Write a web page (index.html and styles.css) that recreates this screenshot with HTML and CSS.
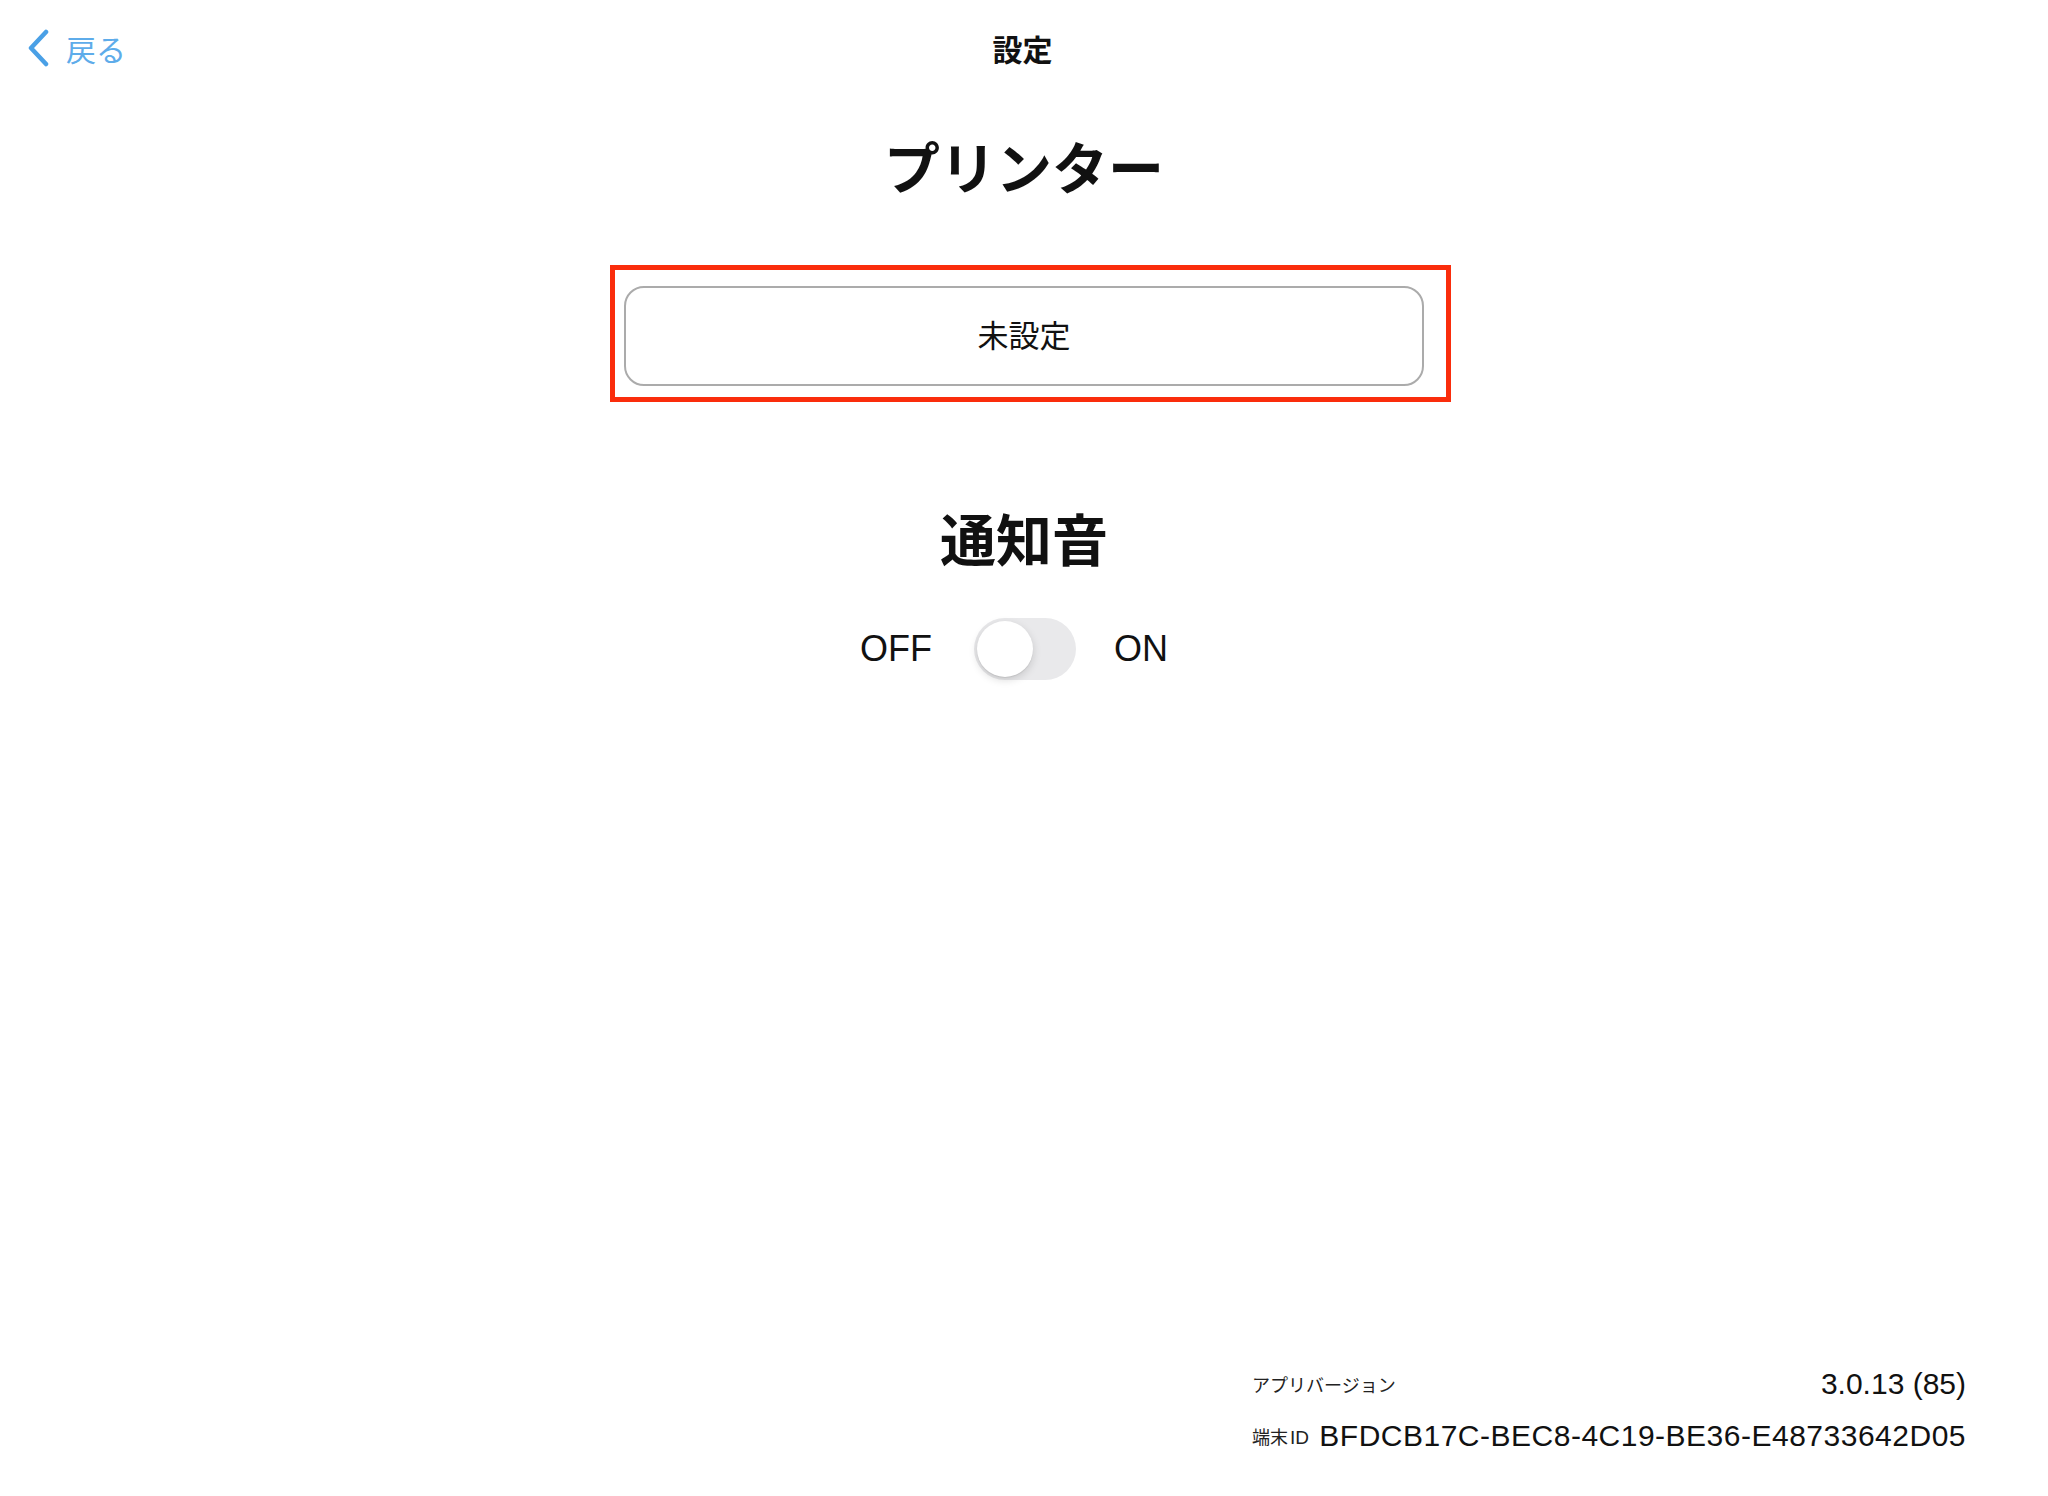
FILE: index.html
```html
<!DOCTYPE html>
<html lang="ja">
<head>
  <meta charset="UTF-8" />
  <meta name="viewport" content="width=device-width, initial-scale=1.0"/>
  <title>設定</title>
  <link rel="stylesheet" href="styles.css">
</head>
<body>

  <div class="page">
    <header class="navbar">
      <a class="back" href="#">
        <svg class="chevron" width="24" height="38" viewBox="0 0 24 38">
          <path d="M20 3 L5 19 L20 35" fill="none" stroke="currentColor" stroke-width="4.5" stroke-linecap="round" stroke-linejoin="round"/>
        </svg>
        <span>戻る</span>
      </a>
      <div class="nav-title">設定</div>
      <div></div>
    </header>

    <h2 class="section-title printer-title">プリンター</h2>

    <div class="printer-wrap">
      <button class="printer-btn" id="printerBtn">未設定</button>
      <div class="highlight"></div>
    </div>

    <h2 class="section-title sound-title">通知音</h2>

    <div class="toggle-row">
      <span class="toggle-label off">OFF</span>
      <label class="toggle">
        <input type="checkbox" id="soundToggle">
        <span class="track"><span class="knob"></span></span>
      </label>
      <span class="toggle-label on">ON</span>
    </div>

    <footer class="info">
      <div class="info-row">
        <span class="info-label">アプリバージョン</span>
        <span class="info-value">3.0.13 (85)</span>
      </div>
      <div class="info-row">
        <span class="info-label">端末<span class="latin">ID</span></span>
        <span class="info-value device-id">BFDCB17C-BEC8-4C19-BE36-E48733642D05</span>
      </div>
    </footer>
  </div>

</body>
</html>
```

FILE: styles.css
```css
body {
  margin: 0;
  font-family: "Liberation Sans", "Noto Sans CJK JP", sans-serif;
  color: #111;
  background: #fff;
}

.page {
  display: flex;
  flex-direction: column;
  align-items: center;
  min-height: 100vh;
  box-sizing: border-box;
  padding-bottom: 43px;
}

.navbar {
  display: grid;
  grid-template-columns: 1fr auto 1fr;
  align-items: center;
  width: 100%;
  height: 96px;
}

.back {
  display: flex;
  align-items: center;
  gap: 16px;
  padding-left: 26px;
  color: #5eacea;
  text-decoration: none;
  font-family: "Noto Sans CJK JP", sans-serif;
  font-size: 30px;
  line-height: 1;
}

.chevron {
  color: #4aa0e6;
}

.nav-title {
  font-family: "Noto Sans CJK JP", sans-serif;
  font-size: 30px;
  font-weight: bold;
  line-height: 1;
  margin-left: -3px;
}

.section-title {
  margin: 0;
  font-family: "Noto Sans CJK JP", sans-serif;
  font-size: 56px;
  font-weight: bold;
  line-height: 1;
}

.printer-title {
  margin-top: 41px;
}

.printer-wrap {
  position: relative;
  margin-top: 93px;
}

.printer-btn {
  display: block;
  width: 800px;
  height: 100px;
  padding: 0 0 6px;
  border: 2px solid #ababab;
  border-radius: 20px;
  background: #fff;
  font-family: "Noto Sans CJK JP", sans-serif;
  font-size: 31px;
  color: #111;
  cursor: pointer;
}

/* red frame drawn over the button */
.highlight {
  position: absolute;
  top: -21px;
  left: -14px;
  right: -27px;
  bottom: -16px;
  border: 5px solid #fa2d0c;
  pointer-events: none;
}

.sound-title {
  margin-top: 123px;
}

.toggle-row {
  display: grid;
  grid-template-columns: 1fr auto 1fr;
  align-items: center;
  column-gap: 40px;
  width: 100%;
  margin-top: 53px;
}

.toggle-label {
  font-size: 36px;
  line-height: 1;
}

.toggle-label.off {
  justify-self: end;
}

.toggle-label.on {
  justify-self: start;
  margin-left: -2px;
}

.toggle {
  display: block;
  margin-left: 2px;
  cursor: pointer;
}

.toggle input {
  display: none;
}

.track {
  position: relative;
  display: block;
  width: 102px;
  height: 62px;
  border-radius: 31px;
  background: #e9e9eb;
}

.knob {
  position: absolute;
  top: 3px;
  left: 3px;
  width: 56px;
  height: 56px;
  border-radius: 50%;
  background: #fff;
  box-shadow: 0 3px 8px rgba(0,0,0,0.15), 0 1px 1px rgba(0,0,0,0.08);
}

.toggle input:checked + .track {
  background: #34c759;
}

.toggle input:checked + .track .knob {
  left: 43px;
}

.info {
  display: flex;
  flex-direction: column;
  gap: 18px;
  width: 714px;
  margin-top: auto;
  align-self: flex-end;
  margin-right: 82px;
}

.info-row {
  display: flex;
  justify-content: space-between;
  align-items: center;
}

.info-label {
  font-family: "Noto Sans CJK JP", sans-serif;
  font-size: 18px;
  color: #222;
}

.info-label .latin {
  font-family: "Liberation Sans", sans-serif;
  font-size: 19px;
  margin-left: 2px;
}

.info-value {
  font-size: 30px;
}

.device-id {
  letter-spacing: 0.5px;
}
```
